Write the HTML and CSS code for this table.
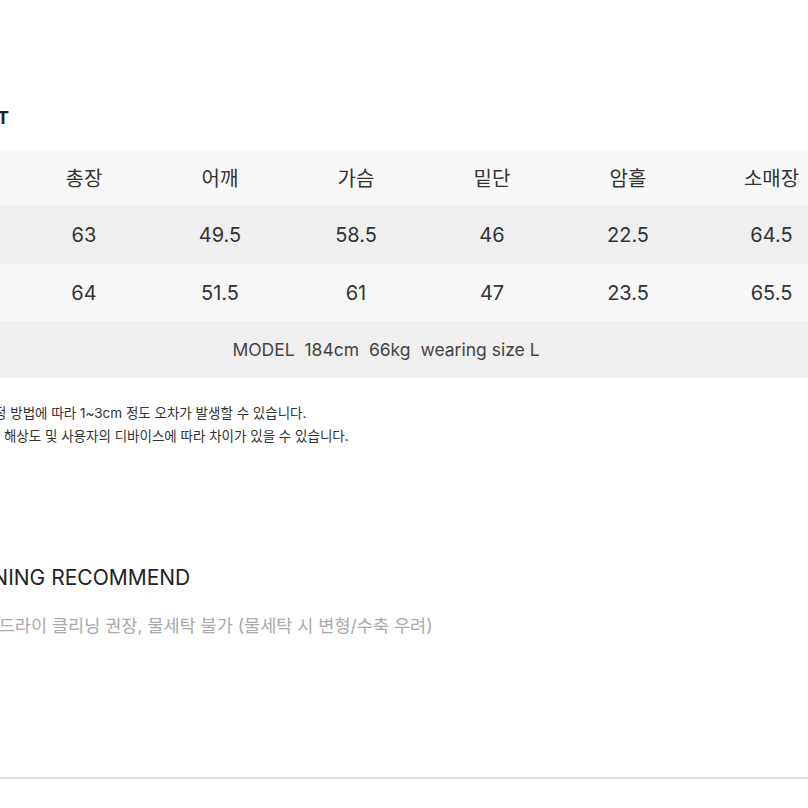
FILE: index.html
```html
<!DOCTYPE html>
<html lang="ko">
<head>
    <meta charset="UTF-8">
    <meta name="viewport" content="width=device-width, initial-scale=1.0">
    <title>SIZE CHART</title>
    <link rel="stylesheet" href="styles.css">
</head>
<body>
    <div class="page">
        <div class="section title-wrap">
            <h2 class="title">SIZE CHART</h2>
        </div>

        <table class="size-table">
            <colgroup>
                <col class="col-size">
                <col class="col-mid">
                <col class="col-mid">
                <col class="col-mid">
                <col class="col-mid">
                <col class="col-mid">
                <col class="col-last">
            </colgroup>
            <tr class="head">
                <td>SIZE</td>
                <td>총장</td>
                <td>어깨</td>
                <td>가슴</td>
                <td>밑단</td>
                <td>암홀</td>
                <td>소매장</td>
            </tr>
            <tr class="row-a">
                <td>M</td>
                <td>63</td>
                <td>49.5</td>
                <td>58.5</td>
                <td>46</td>
                <td>22.5</td>
                <td>64.5</td>
            </tr>
            <tr class="row-b">
                <td>L</td>
                <td>64</td>
                <td>51.5</td>
                <td>61</td>
                <td>47</td>
                <td>23.5</td>
                <td>65.5</td>
            </tr>
            <tr class="row-model">
                <td colspan="7">MODEL&nbsp; 184cm&nbsp; 66kg&nbsp; wearing size L</td>
            </tr>
        </table>

        <div class="section notes">
            <p>* 사이즈 측정 방법에 따라 1~3cm 정도 오차가 발생할 수 있습니다.</p>
            <p>* PC 모니터 해상도 및 사용자의 디바이스에 따라 차이가 있을 수 있습니다.</p>
        </div>

        <div class="section cleaning">
            <h2 class="sub-title">CLEANING RECOMMEND</h2>
            <p class="care">* 세탁 : 드라이 클리닝 권장, 물세탁 불가 (물세탁 시 변형/수축 우려)</p>
        </div>
    </div>
    <div class="divider"></div>
</body>
</html>
```

FILE: styles.css
```css
body {
    margin: 0;
    overflow: hidden;
    background: #fff;
    font-family: Inter, "Noto Sans CJK KR", sans-serif;
    color: #333;
}
.page {
    margin-left: -122px;
    width: 969px;
    padding-top: 106px;
}
.section {
    padding-left: 77px;
}
.title-wrap {
    padding-left: 23px;
}
.title {
    margin: 0;
    font-size: 18px;
    line-height: 24px;
    font-weight: 700;
    color: #222;
}
.size-table {
    width: 969px;
    margin-top: 20px;
    border-collapse: collapse;
    table-layout: fixed;
}
.col-size {
    width: 138px;
}
.col-mid {
    width: 136px;
}
.col-last {
    width: 151px;
}
.size-table td {
    text-align: center;
    font-size: 20px;
    padding: 0;
}
.head td {
    height: 55px;
    background: #f8f8f8;
}
.row-a td {
    height: 59px;
    background: #efefef;
}
.row-b td {
    height: 57px;
    background: #f8f8f8;
}
.row-model td {
    height: 57px;
    background: #efefef;
    font-size: 17.5px;
    color: #444;
    padding-left: 47px;
}
.notes {
    margin-top: 24px;
    padding-left: 52px;
}
.notes p {
    margin: 0;
    font-size: 13.5px;
    line-height: 23px;
    color: #333;
}
.cleaning {
    padding-left: 60px;
}
.sub-title {
    margin: 116px 0 0;
    font-size: 21px;
    line-height: 28px;
    font-weight: 400;
    color: #222;
}
.care {
    margin: 21px 0 0;
    font-size: 17.5px;
    line-height: 26px;
    color: #aaa;
}
.divider {
    margin-top: 138px;
    border-top: 2px solid #ddd;
}
```
